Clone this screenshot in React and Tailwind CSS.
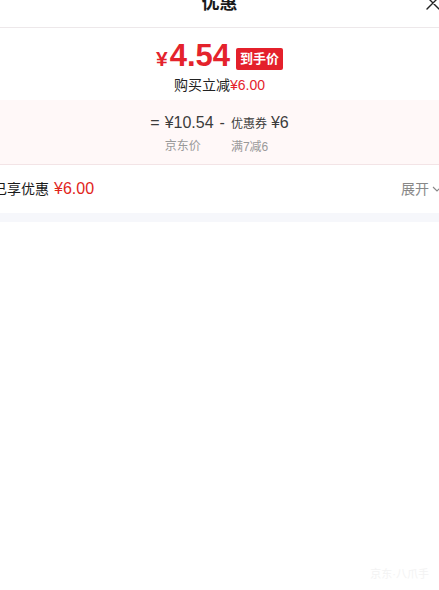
import React from 'react'

const cjk = { fontFamily: '"Liberation Sans", "Noto Sans CJK SC", sans-serif' }

function CloseIcon() {
  return (
    <svg className="w-[16px] h-[16px] text-[#222]" viewBox="0 0 16 16" fill="none" stroke="currentColor" strokeWidth={1.4} strokeLinecap="round">
      <path d="M2 2l12 12M14 2L2 14" />
    </svg>
  )
}

export default function App() {
  return (
    <div className="w-[439px] h-[590px] bg-white overflow-hidden relative" style={cjk}>
      {/* Title bar, partly scrolled off the top */}
      <div className="-mt-[22px] h-[50px] relative flex items-center justify-center border-b border-[#ede8ea]">
        <span className="text-[18px] font-bold text-[#1a1a1a] leading-none">优惠</span>
        <button className="absolute right-[-2px] top-[17px]">
          <CloseIcon />
        </button>
      </div>

      {/* Final price */}
      <div className="pt-[12px] pb-[5px] flex flex-col items-center">
        <div className="flex items-center justify-center">
          <span className="flex items-baseline text-[#e4232c] font-bold leading-none">
            <span className="text-[21px] mr-[2px]">¥</span>
            <span className="text-[31px]">4.54</span>
          </span>
          <span className="mt-[7px] ml-[6px] h-[22px] px-[4px] rounded-[2px] bg-[#e4202b] text-white text-[13px] font-bold leading-[22px]">
            到手价
          </span>
        </div>
        <div className="mt-[4px] text-[14px] leading-[20px] text-[#222]">
          购买立减<span className="text-[#e4232c]">¥6.00</span>
        </div>
      </div>

      {/* Price breakdown */}
      <div className="bg-[#fff8f8] border-b border-[#f3e4e6] pt-[12px] pb-[8px] flex justify-center">
        <div className="flex items-start text-[#3c3c3c]">
          <span className="text-[16px] leading-[22px] mr-[5px]">=</span>
          <div className="flex flex-col">
            <span className="text-[16px] leading-[22px] font-medium">¥10.54</span>
            <span className="mt-[3px] text-[12px] leading-[18px] text-[#999]">京东价</span>
          </div>
          <span className="text-[16px] leading-[22px] mx-[6px]">-</span>
          <div className="flex flex-col">
            <span className="leading-[22px]">
              <span className="text-[12px]">优惠券</span>
              <span className="text-[16px] font-medium ml-[4px]">¥6</span>
            </span>
            <span className="mt-[3px] text-[12px] leading-[18px] text-[#999]">满7减6</span>
          </div>
        </div>
      </div>

      {/* Enjoyed discount row */}
      <div className="-ml-[7px] -mr-[3px] h-[48px] flex items-center justify-between">
        <div className="flex items-center">
          <span className="text-[14px] text-[#1a1a1a]">已享优惠</span>
          <span className="ml-[5px] text-[16px] text-[#e1251b]">¥6.00</span>
        </div>
        <div className="flex items-center text-[#888]">
          <span className="text-[14px]">展开</span>
          <svg className="w-[10px] h-[10px] ml-[3px]" viewBox="0 0 10 10" fill="none" stroke="currentColor" strokeWidth={1.1}>
            <path d="M1 3l4 4 4-4" />
          </svg>
        </div>
      </div>

      <div className="h-[9px] bg-[#f6f7fb]" />

      {/* faint watermark */}
      <div className="absolute right-[10px] bottom-[8px] text-[11px] text-[#f3f3f3]">京东·八爪手</div>
    </div>
  )
}
